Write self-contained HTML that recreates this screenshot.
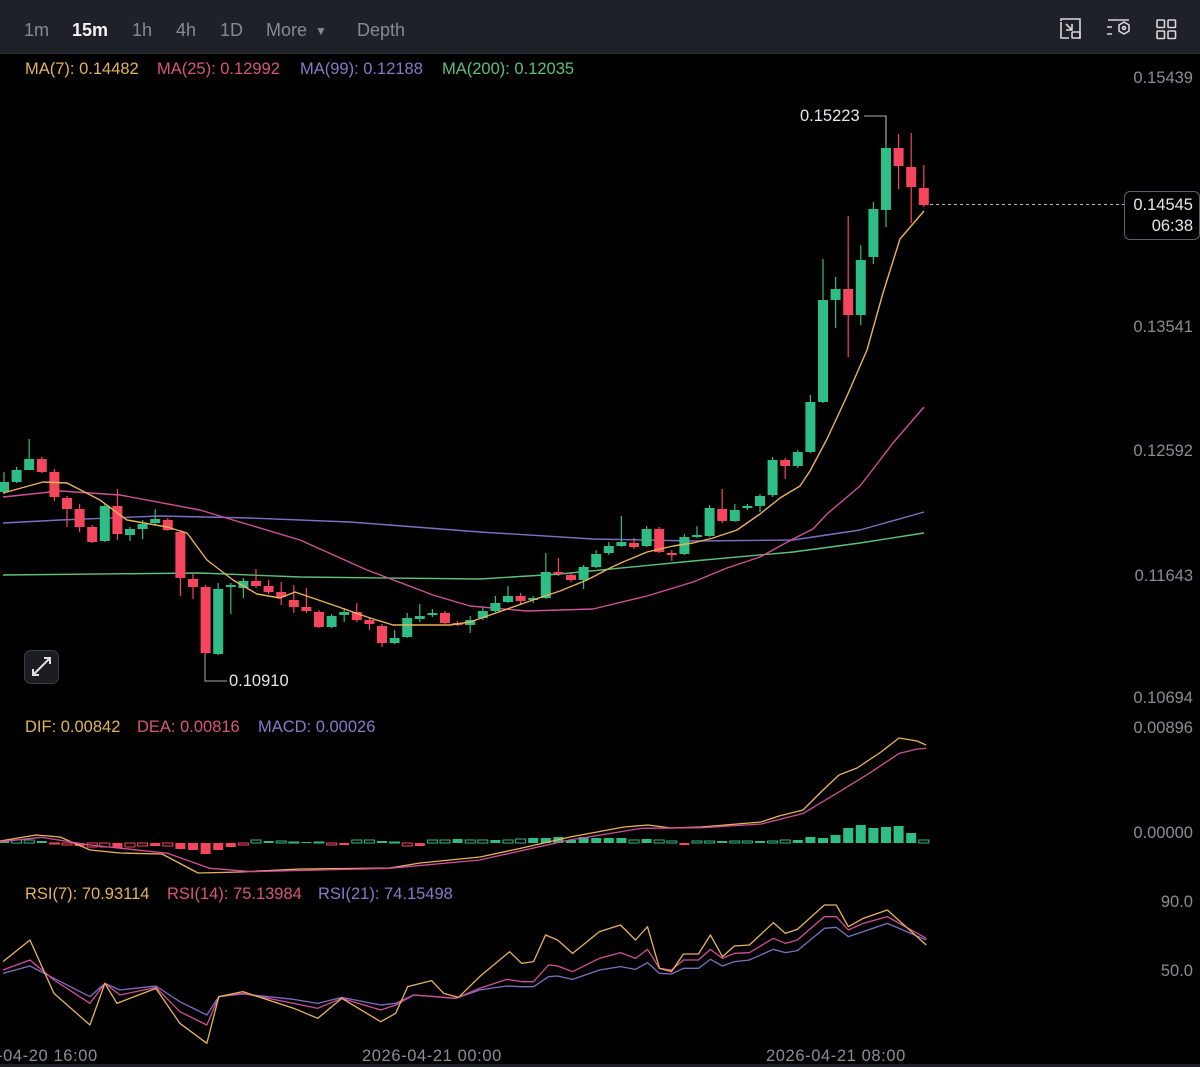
<!DOCTYPE html>
<html><head><meta charset="utf-8">
<style>
*{margin:0;padding:0;box-sizing:border-box}
body{width:1200px;height:1067px;background:#000;overflow:hidden;font-family:"Liberation Sans",sans-serif;position:relative}
#top{position:absolute;left:0;top:0;width:1200px;height:54px;background:#1e2127;border-bottom:1px solid #2c3037}
#top span{position:absolute;top:20px;font-size:18px;color:#868a91}
.ax{position:absolute;right:7px;font-size:16.5px;color:#8a8d93}
.lg{position:absolute;font-size:16.5px;white-space:nowrap}
.t{position:absolute;top:1047px;font-size:16.5px;color:#8a8d93;letter-spacing:0.6px}
svg{position:absolute;left:0;top:0}
</style></head><body>
<div id="top">
<span style="left:24px">1m</span>
<span style="left:72px;color:#f2f3f5;font-weight:bold">15m</span>
<span style="left:132px">1h</span>
<span style="left:176px">4h</span>
<span style="left:220px">1D</span>
<span style="left:266px">More</span>
<span style="left:315px;font-size:12px;top:24px">▼</span>
<span style="left:357px">Depth</span>
</div>
<svg width="1200" height="54" style="z-index:2">
<g fill="none" stroke="#d6d8db" stroke-width="1.6">
<path d="M1061 21v-2h19v19h-2M1061 22v16h8"/><path d="M1066 24l6 6M1066 30h6v-6" /><rect x="1072" y="32" width="8" height="6" rx="1"/>
<path d="M1108 20h21M1107 27h5M1107 34h5"/><path d="M1119 25l5-3 5 3v6l-5 3-5-3z"/><circle cx="1124" cy="28" r="1.5"/>
<rect x="1157" y="20" width="7.5" height="7.5" rx="1"/><rect x="1168" y="20" width="7.5" height="7.5" rx="1"/><rect x="1157" y="31" width="7.5" height="7.5" rx="1"/><rect x="1168" y="31" width="7.5" height="7.5" rx="1"/>
</g></svg>

<div class="lg" style="left:25px;top:60px;color:#e2b45a">MA(7): 0.14482</div>
<div class="lg" style="left:157px;top:60px;color:#d8557e">MA(25): 0.12992</div>
<div class="lg" style="left:300px;top:60px;color:#8a78c8">MA(99): 0.12188</div>
<div class="lg" style="left:442px;top:60px;color:#5cc27a">MA(200): 0.12035</div>
<div class="lg" style="left:25px;top:718px;color:#e2b45a">DIF: 0.00842</div>
<div class="lg" style="left:137px;top:718px;color:#d8557e">DEA: 0.00816</div>
<div class="lg" style="left:258px;top:718px;color:#8a78c8">MACD: 0.00026</div>
<div class="lg" style="left:25px;top:885px;color:#e2b45a">RSI(7): 70.93114</div>
<div class="lg" style="left:167px;top:885px;color:#d8557e">RSI(14): 75.13984</div>
<div class="lg" style="left:318px;top:885px;color:#8a78c8">RSI(21): 74.15498</div>

<div class="ax" style="top:69px">0.15439</div>
<div class="ax" style="top:318px">0.13541</div>
<div class="ax" style="top:442px">0.12592</div>
<div class="ax" style="top:567px">0.11643</div>
<div class="ax" style="top:689px">0.10694</div>
<div class="ax" style="top:719px">0.00896</div>
<div class="ax" style="top:824px">0.00000</div>
<div class="ax" style="top:893px">90.0</div>
<div class="ax" style="top:962px">50.0</div>
<div class="t" style="left:-3px">-04-20 16:00</div>
<div class="t" style="left:362px">2026-04-21 00:00</div>
<div class="t" style="left:766px">2026-04-21 08:00</div>
<div style="position:absolute;left:0;top:1064px;width:1200px;height:3px;background:#1e2127"></div>

<div style="position:absolute;left:1124px;top:191px;width:76px;height:49px;border:1px solid #5d6168;border-radius:6px;background:#000;z-index:3;text-align:right;padding-right:6px;font-size:16.5px;color:#e6e7e9;line-height:21px;padding-top:3px">0.14545<br>06:38</div>
<div style="position:absolute;left:24px;top:650px;width:35px;height:34px;border:1px solid #3a3d44;border-radius:7px;background:#1b1d22"></div>
<div style="position:absolute;left:800px;top:107px;font-size:16.5px;color:#e6e7e9">0.15223</div>
<div style="position:absolute;left:229px;top:672px;font-size:16.5px;color:#e6e7e9">0.10910</div>

<svg id="c" width="1200" height="1067"></svg>
<script>
var NS="http://www.w3.org/2000/svg",s=document.getElementById('c');
function el(t,a){var e=document.createElementNS(NS,t);for(var k in a)e.setAttribute(k,a[k]);s.appendChild(e);return e}
var G="#2ebd85",R="#f6465d";
var C=[[482,492,472,494,1],[470,482,467,483,1],[459,470,439,470,1],[459,472,457,473,0],[472,497,469,501,0],[498,509,496,527,0],[509,527,504,532,0],[527,542,525,543,0],[506,541,504,542,1],[506,534,489,540,0],[529,535,527,541,1],[524,529,520,539,1],[519,523,509,525,1],[520,530,518,531,0],[532,578,530,596,0],[579,587,574,599,0],[587,653,585,654,0],[589,654,583,655,1],[585,587,583,614,1],[581,588,578,598,1],[581,586,569,588,0],[586,592,580,594,0],[592,597,582,605,0],[600,607,585,613,0],[607,611,588,613,0],[612,627,610,628,0],[616,627,614,628,1],[612,615,608,622,1],[612,620,603,622,0],[620,624,618,630,0],[626,643,624,647,0],[638,643,630,644,1],[618,637,613,638,1],[616,619,604,622,1],[613,615,609,617,1],[613,623,611,624,0],[623,625,621,626,0],[620,625,616,633,1],[611,618,608,620,1],[603,611,596,612,1],[596,602,586,603,1],[596,601,593,605,0],[598,600,596,603,1],[572,598,553,599,1],[572,574,558,576,0],[575,580,573,582,0],[567,580,565,589,1],[554,567,550,568,1],[546,553,542,555,1],[542,546,516,547,1],[543,547,538,549,0],[529,546,526,547,1],[529,552,527,553,0],[553,555,550,561,0],[537,554,534,555,1],[535,537,526,538,1],[508,536,505,537,1],[509,521,489,523,0],[510,521,504,522,1],[506,508,504,510,1],[496,506,494,512,1],[460,495,457,497,1],[460,466,458,479,0],[452,466,450,468,1],[402,452,395,453,1],[300,402,259,403,1],[289,300,277,328,1],[289,315,216,357,0],[260,315,245,325,1],[209,257,202,264,1],[148,210,116,227,1],[148,166,134,189,0],[167,187,133,223,0],[188,205,165,207,0]];
function line(p,c,w){el('polyline',{points:p.map(function(q){return q.join(',')}).join(' '),fill:'none',stroke:c,'stroke-width':w||1.4,'stroke-linejoin':'round'})}
line([[3,575],[200,573],[300,577],[480,579],[560,574],[693,561],[793,552],[860,543],[924,533]],"#5cc27a");
line([[3,523],[60,520],[160,516],[250,518],[350,522],[480,532],[593,539],[693,541],[793,540],[860,530],[924,512]],"#7f6fc0");
line([[3,497],[60,491],[120,495],[200,510],[233,520],[300,540],[367,570],[433,595],[470,606],[527,611],[593,609],[647,596],[693,582],[727,568],[760,557],[793,539],[813,529],[827,514],[860,486],[877,464],[893,443],[924,407]],"#d0509a");
C.forEach(function(c,i){var x=4+12.6*i,col=c[4]?G:R;
el('line',{x1:x,x2:x,y1:c[2],y2:c[3],stroke:col,'stroke-width':1.2});
el('rect',{x:x-5,y:c[0],width:10,height:Math.max(1.5,c[1]-c[0]),fill:col});});
line([[3,493],[43,482],[67,483],[100,500],[127,520],[167,527],[187,533],[207,560],[233,580],[257,594],[280,598],[295,592],[333,605],[367,617],[393,625],[450,625],[470,622],[533,600],[560,591],[587,580],[610,568],[623,562],[647,552],[673,546],[693,543],[713,538],[737,530],[760,514],[780,498],[800,486],[810,471],[827,439],[847,396],[867,350],[883,293],[900,239],[924,211]],"#e8b45a");
el('line',{x1:930,x2:1124,y1:204.5,y2:204.5,stroke:"#bbb",'stroke-width':1,'stroke-dasharray':'3,3'});
el('polyline',{points:"864,116 886,116 886,145",fill:'none',stroke:'#aaa','stroke-width':1});
el('polyline',{points:"205,654 205,681 227,681",fill:'none',stroke:'#aaa','stroke-width':1});
el('path',{d:"M33 675l17-17M44 658h6v6M33 669v6h6",fill:'none',stroke:'#e0e0e0','stroke-width':2});
var H=[2,3,3,2,-1,-2,-3,-4,-4,-5,-4,-3,-3,-3,-6,-7,-11,-7,-4,-2,3,2,2,1,1,1,-2,-2,3,3,2,1,-3,-3,3,3,4,3,3,3,3,4,5,5,6,3,6,5,5,5,3,4,3,2,-2,2,2,2,2,2,2,2,3,3,6,5,8,15,18,15,16,17,10,3];
H.forEach(function(h,i){var x=4+12.6*i,col=h>0?G:R,y=h>0?843-h:843;var a={x:x-5,y:y,width:10,height:Math.abs(h)};
if(Math.abs(h)>=5||i%3==0){a.fill=col}else{a.fill='none';a.stroke=col;a['stroke-width']=1}el('rect',a)});
line([[0,841],[36,835],[60,837],[90,850],[120,853],[162,854],[198,873],[240,872],[300,869],[390,868],[420,863],[480,857],[522,848],[570,837],[624,827],[648,825],[671,828],[701,827],[761,822],[779,816],[803,810],[821,792],[839,775],[857,768],[881,752],[899,738],[917,741],[926,745]],"#e8b45a",1.3);
var dea=[[0,365],[70,352],[150,375],[280,400],[350,445],[420,455],[650,445],[800,420],[950,360],[1070,325],[1170,323],[1270,312],[1340,280],[1400,215],[1450,160],[1500,100],[1530,87],[1545,85]];
line(dea.map(function(q){return[q[0]/1.668,720+q[1]/3]}),"#d0509a",1.3);
function rs(a){return a.map(function(q){return[q[0]/1.668,880+q[1]/3]})}
line(rs([[5,280],[50,258],[90,295],[150,350],[175,310],[200,330],[260,318],[300,365],[345,405],[365,350],[405,342],[490,358],[530,370],[570,352],[635,375],[660,370],[690,345],[760,355],[800,330],[845,318],[870,320],[890,320],[915,290],[930,288],[955,298],[1000,270],[1035,260],[1060,268],[1080,248],[1100,280],[1120,282],[1140,265],[1165,265],[1185,238],[1205,258],[1225,245],[1250,240],[1290,208],[1310,218],[1330,212],[1375,145],[1395,142],[1415,170],[1440,155],[1480,130],[1545,180]]),"#7f6fc0",1.3);
line(rs([[5,270],[50,240],[90,300],[150,370],[175,310],[200,345],[260,322],[300,395],[345,435],[365,350],[405,340],[490,370],[530,385],[570,355],[635,390],[660,375],[690,345],[760,355],[800,325],[845,298],[870,305],[890,305],[915,255],[930,258],[955,275],[1000,235],[1035,218],[1060,235],[1080,208],[1100,265],[1120,270],[1140,240],[1165,240],[1185,208],[1205,235],[1225,220],[1250,218],[1290,175],[1310,190],[1330,180],[1375,110],[1395,110],[1415,150],[1440,130],[1480,110],[1545,175]]),"#d0509a",1.3);
line(rs([[5,245],[50,180],[90,340],[150,435],[175,310],[195,370],[260,325],[300,430],[345,490],[365,350],[405,335],[490,385],[530,415],[570,355],[635,425],[660,400],[680,320],[720,302],[740,340],[765,352],[800,290],[850,215],[870,250],[890,245],[910,165],[930,180],[955,220],[1000,155],[1035,135],[1060,180],[1080,140],[1100,265],[1120,275],[1140,222],[1165,222],[1185,165],[1205,230],[1225,198],[1250,195],[1290,128],[1310,160],[1330,148],[1375,75],[1395,75],[1415,140],[1440,115],[1480,90],[1545,195]]),"#e8b45a",1.3);
</script>
</body></html>
